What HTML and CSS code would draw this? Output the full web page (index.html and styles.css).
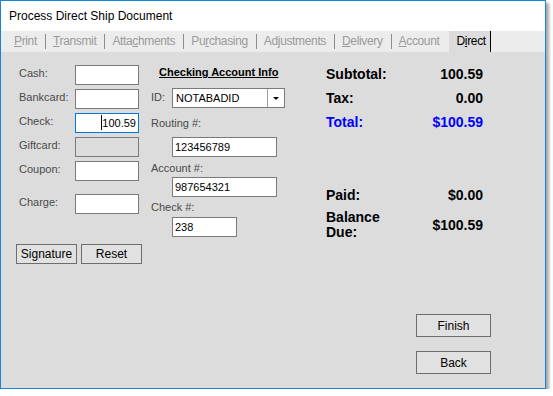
FILE: index.html
```html
<!DOCTYPE html>
<html lang="en">
  <head>
    <title>Process Direct Ship Document</title>
    <meta charset="utf-8" />
    <link rel="stylesheet" href="styles.css">
  </head>
  <body>
    <div class="window">
      <div class="titlebar">Process Direct Ship Document</div>
      <div class="tabs">
        <span class="tab"><u>P</u>rint</span><span class="sep"></span>
        <span class="tab"><u>T</u>ransmit</span><span class="sep"></span>
        <span class="tab">Atta<u>c</u>hments</span><span class="sep"></span>
        <span class="tab">Pu<u>r</u>chasing</span><span class="sep"></span>
        <span class="tab">Ad<u>j</u>ustments</span><span class="sep"></span>
        <span class="tab"><u>D</u>elivery</span><span class="sep"></span>
        <span class="tab"><u>A</u>ccount</span>
        <span class="tab active">D<u>i</u>rect</span>
      </div>
      <div class="content">
        <div class="col-pay">
          <div class="pay-row"><label>Cash:</label><div class="box"></div></div>
          <div class="pay-row"><label>Bankcard:</label><div class="box"></div></div>
          <div class="pay-row"><label>Check:</label><div class="box focus"><span class="caret"></span>100.59</div></div>
          <div class="pay-row"><label>Giftcard:</label><div class="box disabled"></div></div>
          <div class="pay-row"><label>Coupon:</label><div class="box"></div></div>
          <div class="pay-row charge"><label>Charge:</label><div class="box"></div></div>
          <div class="pay-buttons">
            <button class="btn">Signature</button>
            <button class="btn">Reset</button>
          </div>
        </div>

        <div class="col-check">
          <h2>Checking Account Info</h2>
          <div class="id-row">
            <label>ID:</label>
            <div class="combo"><span class="combo-text">NOTABADID</span><span class="combo-btn"><span class="arrow"></span></span></div>
          </div>
          <label class="above routing">Routing #:</label>
          <div class="box wide routing-box">123456789</div>
          <label class="above account">Account #:</label>
          <div class="box wide account-box">987654321</div>
          <label class="above checkno">Check #:</label>
          <div class="box short checkno-box">238</div>
        </div>

        <div class="col-totals">
          <div class="totals">
            <span>Subtotal:</span><span class="val">100.59</span>
            <span>Tax:</span><span class="val">0.00</span>
            <span class="blue">Total:</span><span class="val blue">$100.59</span>
          </div>
          <div class="totals paid">
            <span>Paid:</span><span class="val">$0.00</span>
          </div>
          <div class="balance">
            <span>Balance<br />Due:</span><span class="val">$100.59</span>
          </div>
          <div class="actions">
            <button class="btn big">Finish</button>
            <button class="btn big">Back</button>
          </div>
        </div>
      </div>
    </div>
  </body>
</html>
```

FILE: styles.css
```css
body {
  margin: 0;
  background: #fff;
  font-family: "Liberation Sans", Arial, sans-serif;
}

.window {
  width: 544px;
  height: 387px;
  border: 1px solid #1883d7;
  box-shadow: 3px 3px 3px rgba(0, 0, 0, 0.35);
  display: flex;
  flex-direction: column;
  background: #dcdcdc;
}

.titlebar {
  height: 30px;
  line-height: 30px;
  padding-left: 8px;
  font-size: 12px;
  background: #fff;
  color: #000;
}

.tabs {
  height: 21px;
  background: #ececec;
  display: flex;
  align-items: center;
  padding-left: 6px;
  font-size: 12px;
  letter-spacing: -0.35px;
  color: #9a9a9a;
}

.tab {
  padding: 0 8px 0 7px;
  line-height: 21px;
  white-space: nowrap;
}

.sep {
  width: 1px;
  height: 15px;
  background: #8c8c8c;
}

.tab.active {
  background: #dcdcdc;
  color: #000;
  padding: 0 4px 0 8px;
  border-right: 1px solid #000;
  margin-left: 1px;
}

.content {
  flex: 1;
  display: flex;
  padding: 13px 0 14px 15px;
  font-size: 11px;
}

/* left column */
.col-pay {
  width: 135px;
  display: flex;
  flex-direction: column;
  gap: 4px;
}

.pay-row {
  display: flex;
  align-items: flex-start;
}

.pay-row label {
  width: 56px;
  padding: 2px 0 0 3px;
  line-height: 13px;
  color: #4a4a4a;
}

.pay-row.charge {
  margin-top: 9px;
}

.box {
  box-sizing: border-box;
  width: 64px;
  height: 20px;
  border: 1px solid #7a7a7a;
  background: #fff;
  line-height: 18px;
  padding: 0 2px;
  color: #000;
}

.box.focus {
  border-color: #0078d7;
  text-align: right;
}

.box.disabled {
  background: #dcdcdc;
}

.caret {
  display: inline-block;
  width: 1px;
  height: 15px;
  background: #000;
  vertical-align: -3px;
}

.pay-buttons {
  margin-top: 26px;
  display: flex;
  gap: 4px;
}

.btn {
  box-sizing: border-box;
  width: 61px;
  height: 20px;
  padding: 0;
  border: 1px solid #6d6d6d;
  background: #e1e1e1;
  font-family: "Liberation Sans", Arial, sans-serif;
  font-size: 12px;
  color: #000;
}

/* middle column */
.col-check {
  width: 175px;
  display: flex;
  flex-direction: column;
  align-items: flex-start;
}

h2 {
  margin: 1px 0 0 8px;
  font-size: 11px;
  line-height: 13px;
  font-weight: bold;
  text-decoration: underline;
  color: #000;
}

.id-row {
  display: flex;
  align-items: center;
  margin-top: 9px;
}

.id-row label {
  width: 21px;
  color: #4a4a4a;
  margin-top: -2px;
}

.combo {
  box-sizing: border-box;
  width: 113px;
  height: 20px;
  border: 1px solid #7a7a7a;
  background: #fff;
  display: flex;
}

.combo-text {
  flex: 1;
  padding-left: 3px;
  line-height: 18px;
}

.combo-btn {
  width: 16px;
  border-left: 1px solid #a0a0a0;
  display: flex;
  align-items: center;
  justify-content: center;
}

.arrow {
  width: 0;
  height: 0;
  border-left: 3px solid transparent;
  border-right: 3px solid transparent;
  border-top: 3px solid #000;
}

label.above {
  line-height: 13px;
  color: #4a4a4a;
}

.routing { margin-top: 9px; }
.routing-box { margin-top: 7px; }
.account { margin-top: 5px; }
.account-box { margin-top: 2px; }
.checkno { margin-top: 4px; }
.checkno-box { margin-top: 3px; }

.box.wide {
  width: 105px;
  margin-left: 21px;
}

.box.short {
  width: 65px;
  margin-left: 21px;
}

/* right column */
.col-totals {
  width: 165px;
  display: flex;
  flex-direction: column;
}

.totals {
  width: 157px;
  display: grid;
  grid-template-columns: 1fr auto;
  grid-auto-rows: 24px;
  align-items: center;
  margin-top: -3px;
  font-size: 14px;
  font-weight: bold;
  color: #000;
}

.totals.paid {
  margin-top: 49px;
}

.val {
  text-align: right;
}

.blue {
  color: #0000ff;
}

.balance {
  width: 157px;
  margin-top: 3px;
  display: flex;
  justify-content: space-between;
  align-items: center;
  font-size: 14px;
  font-weight: bold;
  line-height: 15px;
}

.actions {
  margin-top: auto;
  display: flex;
  flex-direction: column;
  align-items: flex-end;
  gap: 14px;
}

.btn.big {
  width: 75px;
  height: 23px;
}
```
